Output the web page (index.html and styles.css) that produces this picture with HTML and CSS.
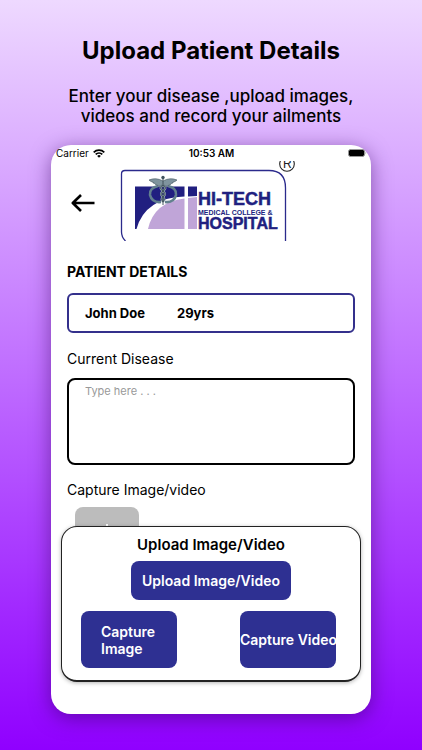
FILE: index.html
```html
<!DOCTYPE html>
<html lang="en">
<head>
    <meta charset="UTF-8">
    <meta name="viewport" content="width=device-width, initial-scale=1.0">
    <title>Upload Patient Details</title>
    <link rel="stylesheet" href="styles.css">
</head>
<body>
    <header class="intro">
        <h1>Upload Patient Details</h1>
        <p>Enter your disease ,upload images, videos and record your ailments</p>
    </header>

    <main class="phone">
        <div class="status-bar">
            <span class="carrier">Carrier
                <svg width="12" height="9" viewBox="0 0 12 9" fill="none" stroke="#000" stroke-width="1.7">
                    <path d="M.7 3.3a7.6 7.6 0 0 1 10.6 0M2.7 5.4a4.7 4.7 0 0 1 6.6 0"/>
                    <path d="M6 8.8 4.2 7a2.5 2.5 0 0 1 3.6 0z" fill="#000" stroke="none"/>
                </svg>
            </span>
            <span class="time">10:53 AM</span>
            <svg class="battery" width="19" height="8" viewBox="0 0 19 8">
                <rect x=".5" y=".5" width="16" height="7" rx="2" fill="#000" stroke="#999"/>
                <path d="M17.6 2.6q1.2 1.4 0 2.8z" fill="#777"/>
            </svg>
        </div>

        <div class="top-bar">
            <button class="back" aria-label="Back">
                <svg width="24" height="20" viewBox="0 0 24 20" fill="none" stroke="#000" stroke-width="2.6" stroke-linejoin="round">
                    <path d="M23.500 10H2M10 2 1.800 10l8.200 8"/>
                </svg>
            </button>
            <svg class="logo" width="180" height="80" viewBox="0 0 180 80">
                <path d="M6.500 80Q2.500 76 2.500 71V13Q2.500 9.500 6 9.500H150Q166.500 9.500 166.500 27V80" fill="none" stroke="#2b2a8c" stroke-width="1.3"/>
                <!-- arch -->
                <path d="M16 25.500H65.500V35.500Q26 37 17.500 68H16zM69 25.500H78V35L69 35.500z" fill="#211f80"/>
                <path d="M29 68Q35 41 65.500 37.500V68zM69 37 78 36V68H69z" fill="#c0a5d8"/>
                <!-- caduceus -->
                <path d="M39 25Q30 27 31 34Q33 42 42 41M49 25Q58 27 57 34Q55 42 46 41" fill="none" stroke="#62808e" stroke-width="2.600"/>
                <path d="M44 24q-5 3 0 6 4 3 0 6-3 2 0 5M44 24q5 3 0 6-4 3 0 6 3 2 0 5" fill="none" stroke="#9fb0b8" stroke-width="2"/>
                <path d="M44 24q-5 3 0 6 4 3 0 6-3 2 0 5M44 24q5 3 0 6-4 3 0 6 3 2 0 5M44 17V44" fill="none" stroke="#40535d"/>
                <path d="M44 20Q37 16 30 19Q32 21 34 21Q33 22 36 22.500Q36 24 38 24Q39 26 43 25zM44 20Q51 16 58 19Q56 21 54 21Q55 22 52 22.500Q52 24 50 24Q49 26 45 25z" fill="#7f949e" stroke="#40535d" stroke-width=".6"/>
                <circle cx="44" cy="16.500" r="1.700" fill="#40535d"/>
                <g class="logo-name">
                    <text x="79" y="44" font-size="18">HI-TECH</text>
                    <text class="small" x="79" y="54" font-size="7">MEDICAL COLLEGE &amp;</text>
                    <text x="79" y="68" font-size="16">HOSPITAL</text>
                </g>
                <circle cx="168" cy="3" r="7.300" fill="none" stroke="#222" stroke-width="1.100"/>
                <text class="mark" x="164" y="7" font-size="12">R</text>
            </svg>
        </div>

        <form class="details">
            <h2>PATIENT DETAILS</h2>
            <div class="patient">
                <span>John Doe</span>
                <span>29yrs</span>
            </div>
            <label for="disease">Current Disease</label>
            <textarea id="disease" placeholder="Type here . . ."></textarea>
            <h3>Capture Image/video</h3>
            <button type="button" class="add" aria-label="Add image or video">
                <svg width="20" height="22" viewBox="0 0 20 22" stroke="#fff" stroke-width="2">
                    <path d="M10 0V22M0 11H20"/>
                </svg>
            </button>
        </form>

        <section class="dialog">
            <h2>Upload Image/Video</h2>
            <button class="upload">Upload Image/Video</button>
            <div class="capture">
                <button class="image">Capture Image</button>
                <button>Capture Video</button>
            </div>
        </section>
    </main>
</body>
</html>
```

FILE: styles.css
```css
* {
    box-sizing: border-box;
}
body {
    margin: 0;
    min-height: 100vh;
    padding: 36px 51px;
    display: flex;
    flex-direction: column;
    font-family: Inter, "Liberation Sans", sans-serif;
    color: #000;
    background: linear-gradient(#eed9ff, #9000ff);
}
h1, h2, h3, p {
    margin: 0;
}
button {
    font-family: inherit;
    border: none;
    padding: 0;
    cursor: pointer;
}
.intro {
    text-align: center;
}
.intro h1 {
    font-size: 24px;
    line-height: 30px;
    font-weight: 700;
}
.intro p {
    max-width: 300px;
    margin: 20px auto 19px;
    font-size: 17px;
    line-height: 20px;
    font-weight: 500;
}
.phone {
    position: relative;
    flex: 1;
    background-color: #fff;
    border-radius: 20px;
    box-shadow: 0 4px 20px rgba(50, 0, 90, 0.5);
}
.status-bar {
    display: grid;
    grid-template-columns: 1fr auto 1fr;
    align-items: center;
    height: 16px;
    padding: 0 4px 0 5px;
    font-size: 10px;
}
.carrier {
    display: flex;
    align-items: center;
    gap: 4px;
}
.time {
    font-weight: 600;
}
.battery {
    justify-self: end;
}
.top-bar {
    display: flex;
    align-items: center;
    gap: 24px;
    height: 80px;
    padding-left: 20px;
}
.back {
    display: flex;
    margin-top: 4px;
    background: none;
}
.logo-name {
    font-family: "Liberation Sans", sans-serif;
    font-weight: 700;
    fill: #211f80;
    stroke: #211f80;
    stroke-width: 0.5px;
}
.small {
    stroke: none;
}
.mark {
    font-family: "Liberation Sans", sans-serif;
    fill: #222;
}
.details {
    padding: 21px 16px 0;
}
.details h2 {
    font-size: 14px;
    line-height: 20px;
    font-weight: 700;
}
.patient {
    display: flex;
    align-items: center;
    gap: 32px;
    height: 40px;
    margin: 11px 0 16px;
    padding: 0 16px;
    border: 2px solid #34308c;
    border-radius: 6px;
    font-size: 13px;
    font-weight: 700;
}
.details label, .details h3 {
    display: block;
    font-size: 14px;
    line-height: 20px;
    font-weight: 400;
}
textarea {
    display: block;
    width: 100%;
    height: 87px;
    margin: 9px 0 15px;
    padding: 4px 16px;
    border: 2px solid #000;
    border-radius: 8px;
    resize: none;
    font-family: inherit;
    font-size: 11px;
}
textarea::placeholder {
    color: #999;
}
.add {
    display: flex;
    justify-content: center;
    align-items: center;
    width: 64px;
    height: 56px;
    margin: 7px 8px;
    border-radius: 8px;
    background-color: #bcbcbc;
}
/* sits over the form */
.dialog {
    position: absolute;
    left: 10px;
    right: 10px;
    bottom: 32px;
    display: flex;
    flex-direction: column;
    align-items: center;
    padding: 8px 19px 12px;
    border: 1px solid #222;
    border-bottom-width: 2px;
    border-radius: 16px;
    background-color: #fff;
    box-shadow: 0 1px 4px rgba(0, 0, 0, 0.3);
}
.dialog h2 {
    font-size: 15px;
    line-height: 20px;
    font-weight: 600;
}
.dialog button {
    border-radius: 8px;
    background-color: #2e3092;
    color: #fff;
    font-size: 14px;
    line-height: 17px;
    font-weight: 600;
}
.dialog .upload {
    width: 160px;
    height: 39px;
    margin: 6px 0 11px;
}
.capture {
    display: flex;
    justify-content: space-between;
    align-self: stretch;
}
.capture button {
    width: 96px;
    height: 57px;
    margin-right: 5px;
    white-space: nowrap;
}
.dialog .image {
    padding: 0 20px;
    text-align: left;
    white-space: normal;
}
```
